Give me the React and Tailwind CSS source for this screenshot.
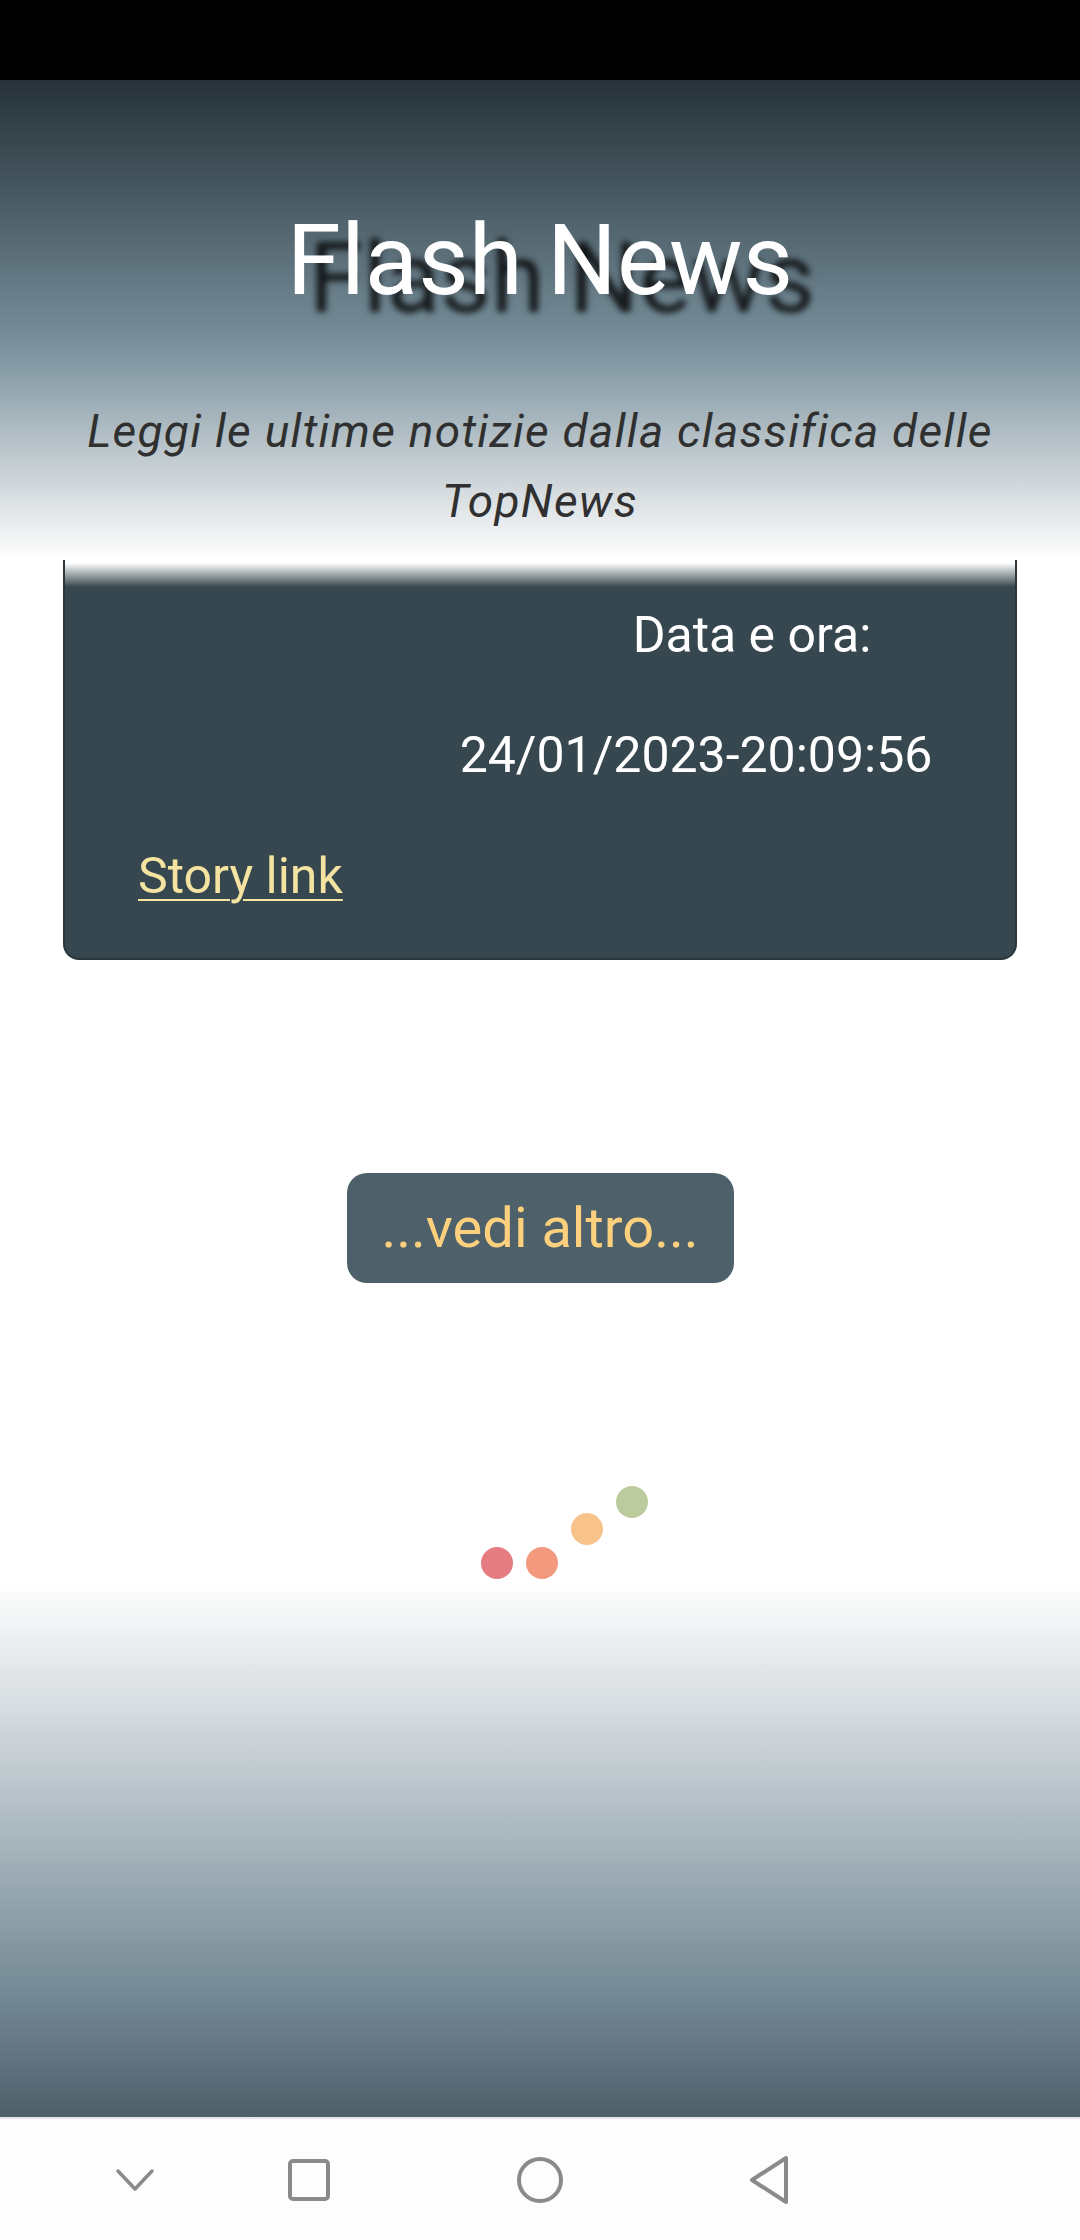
const BODY_FONT = { fontFamily: 'Roboto, "Noto Sans", sans-serif' };

function NavBar() {
  return (
    <div className="flex h-[123px] items-center border-t-2 border-[#e4e6e8] bg-[#fdfdfd]">
      <svg width="40" height="24" viewBox="0 0 40 24" className="ml-[115px]" fill="none" stroke="#8a8a8a" strokeWidth="3.5" strokeLinecap="round" strokeLinejoin="round">
        <path d="M3 3 L20 21 L37 3" />
      </svg>
      <svg width="46" height="46" viewBox="0 0 46 46" className="ml-[131px]" fill="none" stroke="#8a8a8a" strokeWidth="4">
        <rect x="4" y="4" width="38" height="38" rx="3" />
      </svg>
      <svg width="48" height="48" viewBox="0 0 48 48" className="ml-[184px]" fill="none" stroke="#8a8a8a" strokeWidth="4">
        <circle cx="24" cy="24" r="21" />
      </svg>
      <svg width="44" height="50" viewBox="0 0 44 50" className="ml-[183px]" fill="none" stroke="#8a8a8a" strokeWidth="4" strokeLinejoin="round">
        <path d="M5 25 L39 3 L39 47 Z" />
      </svg>
    </div>
  );
}

function Loader() {
  return (
    <div className="mt-[203px] flex justify-center pl-[49px]">
      <div className="flex items-end gap-[13px]">
        <span className="h-[32px] w-[32px] rounded-full bg-[#e47c82]" />
        <span className="h-[32px] w-[32px] rounded-full bg-[#f39a7e]" />
        <span className="mb-[34px] h-[32px] w-[32px] rounded-full bg-[#f8c38a]" />
        <span className="mb-[61px] h-[32px] w-[32px] rounded-full bg-[#bccb9d]" />
      </div>
    </div>
  );
}

export default function App() {
  return (
    <div className="flex h-[2240px] w-[1080px] flex-col bg-white" style={BODY_FONT}>
      <div className="h-[80px] bg-black" />

      <header className="flex h-[480px] flex-col items-center bg-[linear-gradient(to_bottom,#263238_0%,#4a5b64_25%,#78909c_55%,#c4cdd2_80%,#ffffff_100%)] pt-[132px]">
        <h1 className="text-[98px] leading-none font-normal text-white [text-shadow:22px_18px_6px_rgba(0,0,0,0.8)]">
          Flash News
        </h1>
        <p className="mt-[86px] w-[960px] text-center text-[46px] leading-[70px] tracking-[1.3px] text-[#303030] italic">
          Leggi le ultime notizie dalla classifica delle TopNews
        </p>
      </header>

      <div className="mx-[63px] flex h-[400px] flex-col rounded-b-[16px] border-x-2 border-b-2 border-[#2b373d] bg-[linear-gradient(to_bottom,#ffffff_0px,#ffffff_3px,#37474f_27px)] text-[50px] leading-[60px] text-white">
        <div className="mt-[45px] ml-[537px] w-[300px] text-center">Data e ora:</div>
        <div className="mt-[60px] ml-[371px] w-[520px] text-center">24/01/2023-20:09:56</div>
        <a href="#" className="mt-[61px] ml-[73px] self-start text-[#f5e3a1] underline decoration-2 underline-offset-[6px]">
          Story link
        </a>
      </div>

      <div className="flex flex-1 flex-col">
        <div className="mt-[213px] flex justify-center">
          <button className="flex h-[110px] w-[387px] items-center justify-center rounded-[20px] bg-[#4e616b] text-[56px] leading-none text-[#fcd07d]">
            ...vedi altro...
          </button>
        </div>
        <Loader />
      </div>

      <div className="h-[537px] bg-[linear-gradient(to_bottom,#ffffff_0%,#d6dce0_24%,#a5b3bb_50%,#768b96_76%,#4e5f6a_100%)]" />

      <NavBar />
    </div>
  );
}
